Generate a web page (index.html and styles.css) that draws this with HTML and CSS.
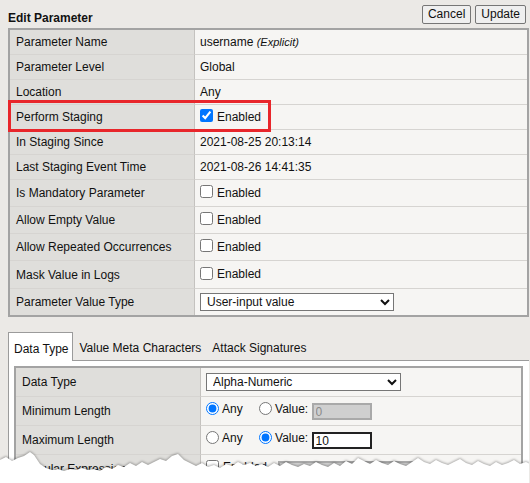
FILE: index.html
```html
<!DOCTYPE html>
<html>
<head>
<meta charset="utf-8">
<link rel="stylesheet" href="styles.css">
</head>
<body>
<div class="page">
  <div class="topbar">
    <h1 class="title">Edit Parameter</h1>
    <div class="actions">
      <button class="btn">Cancel</button>
      <button class="btn">Update</button>
    </div>
  </div>

  <div class="params-wrap">
    <table class="grid params">
      <tr class="r-text"><td class="lbl">Parameter Name</td><td class="val">username <i class="note">(Explicit)</i></td></tr>
      <tr class="r-text"><td class="lbl">Parameter Level</td><td class="val">Global</td></tr>
      <tr class="r-text"><td class="lbl">Location</td><td class="val">Any</td></tr>
      <tr class="r-text"><td class="lbl">Perform Staging</td><td class="val"><label class="chk"><input type="checkbox" checked>Enabled</label></td></tr>
      <tr class="r-text"><td class="lbl">In Staging Since</td><td class="val">2021-08-25 20:13:14</td></tr>
      <tr class="r-text"><td class="lbl">Last Staging Event Time</td><td class="val">2021-08-26 14:41:35</td></tr>
      <tr class="r-check"><td class="lbl">Is Mandatory Parameter</td><td class="val"><label class="chk"><input type="checkbox">Enabled</label></td></tr>
      <tr class="r-check"><td class="lbl">Allow Empty Value</td><td class="val"><label class="chk"><input type="checkbox">Enabled</label></td></tr>
      <tr class="r-check"><td class="lbl">Allow Repeated Occurrences</td><td class="val"><label class="chk"><input type="checkbox">Enabled</label></td></tr>
      <tr class="r-mask"><td class="lbl">Mask Value in Logs</td><td class="val"><label class="chk"><input type="checkbox">Enabled</label></td></tr>
      <tr class="r-last"><td class="lbl">Parameter Value Type</td><td class="val">
        <select class="sel sel-type"><option>User-input value</option></select>
      </td></tr>
    </table>
    <div class="highlight"></div>
  </div>

  <div class="tabs">
    <div class="tab active">Data Type</div>
    <div class="tab">Value Meta Characters</div>
    <div class="tab">Attack Signatures</div>
  </div>
  <div class="panel">
    <table class="grid inner">
      <tr class="r-inner"><td class="lbl">Data Type</td><td class="val">
        <select class="sel sel-data"><option>Alpha-Numeric</option></select>
      </td></tr>
      <tr class="r-inner"><td class="lbl">Minimum Length</td><td class="val">
        <label class="rad"><input type="radio" name="min" checked>Any</label>
        <label class="rad"><input type="radio" name="min">Value:</label>
        <input class="num" type="text" value="0" disabled>
      </td></tr>
      <tr class="r-inner"><td class="lbl">Maximum Length</td><td class="val">
        <label class="rad"><input type="radio" name="max">Any</label>
        <label class="rad"><input type="radio" name="max" checked>Value:</label>
        <input class="num active-num" type="text" value="10">
      </td></tr>
      <tr class="r-inner"><td class="lbl">Regular Expression</td><td class="val">
        <label class="chk"><input type="checkbox">Enabled</label>
        <input class="regex" type="text" disabled>
      </td></tr>
    </table>
  </div>

  <svg class="torn" width="530" height="35" viewBox="0 0 530 35">
    <polygon fill="#ffffff" points="0,12 6,9 12,13 18,10 24,8 30,4 34,7 40,16 46,20 52,22 58,21 64,23 70,21 76,22 82,20 88,22 94,21 100,23 106,19 112,21 118,17 124,19 130,15 136,18 142,14 148,17 154,14 160,11 166,13 172,8 178,6 184,12 190,15 196,18 202,15 208,19 214,17 220,20 226,16 232,18 238,14 244,17 250,15 256,18 262,16 268,19 274,15 280,18 286,14 292,17 298,19 304,16 310,18 316,14 322,17 328,19 334,15 340,18 346,13 352,16 358,10 364,13 370,16 376,12 382,15 388,17 394,13 400,16 406,18 412,14 418,10 424,14 430,16 436,12 442,15 448,17 454,14 460,11 466,15 472,17 478,13 484,16 490,18 496,14 502,17 508,15 514,12 520,16 526,14 530,16 530,35 0,35"/>
  </svg>
</div>
</body>
</html>
```
FILE: styles.css
```css
html, body {
  margin: 0;
  padding: 0;
  background: #ebe9e6;
}
body {
  font-family: "Liberation Sans", Arial, sans-serif;
  font-size: 12px;
  color: #111;
  width: 530px;
  height: 483px;
  overflow: hidden;
}
.page {
  position: relative;
  padding-left: 8px;
  width: 521px;
  height: 483px;
  overflow: hidden;
}
.topbar {
  display: flex;
  justify-content: space-between;
  align-items: flex-start;
  height: 28px;
}
.title {
  margin: 0;
  align-self: flex-end;
  font-size: 12px;
  line-height: 14px;
  padding-bottom: 3px;
  font-weight: bold;
}
.actions {
  display: flex;
  gap: 4px;
  margin-top: 5px;
  margin-right: 3px;
}
.btn {
  font-family: "Liberation Sans", Arial, sans-serif;
  font-size: 12px;
  height: 19px;
  padding: 0 5px;
  border: 1px solid #767676;
  border-radius: 2px;
  background: #efefef;
  color: #111;
  line-height: 15px;
}

.params-wrap {
  position: relative;
}
.grid {
  border-collapse: separate;
  border-spacing: 0;
  border: 2px solid #a3a3a3;
  background: #f6f5f3;
}
.params {
  width: 521px;
}
.grid td {
  padding: 0;
  vertical-align: middle;
  border-bottom: 1px solid #d6d4d1;
  white-space: nowrap;
}
.grid tr:last-child td {
  border-bottom: none;
}
.grid .lbl {
  background: #dfdedb;
  border-right: 1px solid #c4c2bf;
  padding-left: 6px;
}
.params .lbl {
  width: 178px;
}
.grid .val {
  padding-left: 5px;
}
.r-text td { height: 24px; }
.r-check td { height: 26px; }
.r-mask td { height: 27px; }
.r-last td { height: 26px; }
.note {
  font-size: 11px;
}

.chk {
  display: inline-flex;
  align-items: center;
}
.chk input {
  width: 13px;
  height: 13px;
  margin: 0 4px 2px 0;
}
.rad {
  display: inline-flex;
  align-items: center;
}
.rad input {
  width: 13px;
  height: 13px;
  margin: 0 3px 2px 0;
}
.rad + .rad {
  margin-left: 13px;
}

.sel {
  font-family: "Liberation Sans", Arial, sans-serif;
  font-size: 12px;
  height: 18px;
  border: 1px solid #767676;
  border-radius: 0;
  background: #fff;
  color: #111;
  padding: 0 2px;
  vertical-align: middle;
}
.sel-type { width: 194px; }
.sel-data { width: 195px; }

.highlight {
  position: absolute;
  left: 0;
  top: 72px;
  width: 263px;
  height: 32px;
  box-sizing: border-box;
  border: 3px solid #e8262b;
}

.tabs {
  display: flex;
  margin-top: 15px;
  height: 28px;
  align-items: stretch;
}
.tab {
  display: flex;
  align-items: center;
  padding: 2px 4px 0 5px;
  border: 1px solid transparent;
  border-bottom: none;
  line-height: 14px;
}
.tab.active {
  background: #fff;
  border-color: #9b9b9b;
  margin-bottom: -1px;
  position: relative;
  z-index: 1;
  padding-top: 4px;
}
.panel {
  background: #fff;
  border-top: 1px solid #9b9b9b;
  border-left: 1px solid #9b9b9b;
  padding: 5px 6px 5px 5px;
  height: 111px;
  overflow: hidden;
}
.inner {
  width: 509px;
}
.inner .lbl {
  width: 178px;
}
.r-inner td { height: 28px; }

.num {
  font-family: "Liberation Sans", Arial, sans-serif;
  font-size: 12px;
  width: 60px;
  height: 17px;
  box-sizing: border-box;
  padding: 0 2px;
  margin-left: 0;
  border: 2px solid #a9a9a9;
  background: #cfcfcf;
  color: #8a8a8a;
  vertical-align: middle;
}
.num.active-num {
  background: #fff;
  border-color: #222;
  color: #111;
}
.regex {
  width: 138px;
  height: 17px;
  box-sizing: border-box;
  margin-left: 8px;
  border: 2px solid #a9a9a9;
  background: #cfcfcf;
  vertical-align: middle;
}

.torn {
  position: absolute;
  left: 0;
  top: 448px;
  filter: drop-shadow(0 -1px 1px rgba(0,0,0,0.3));
}
```
